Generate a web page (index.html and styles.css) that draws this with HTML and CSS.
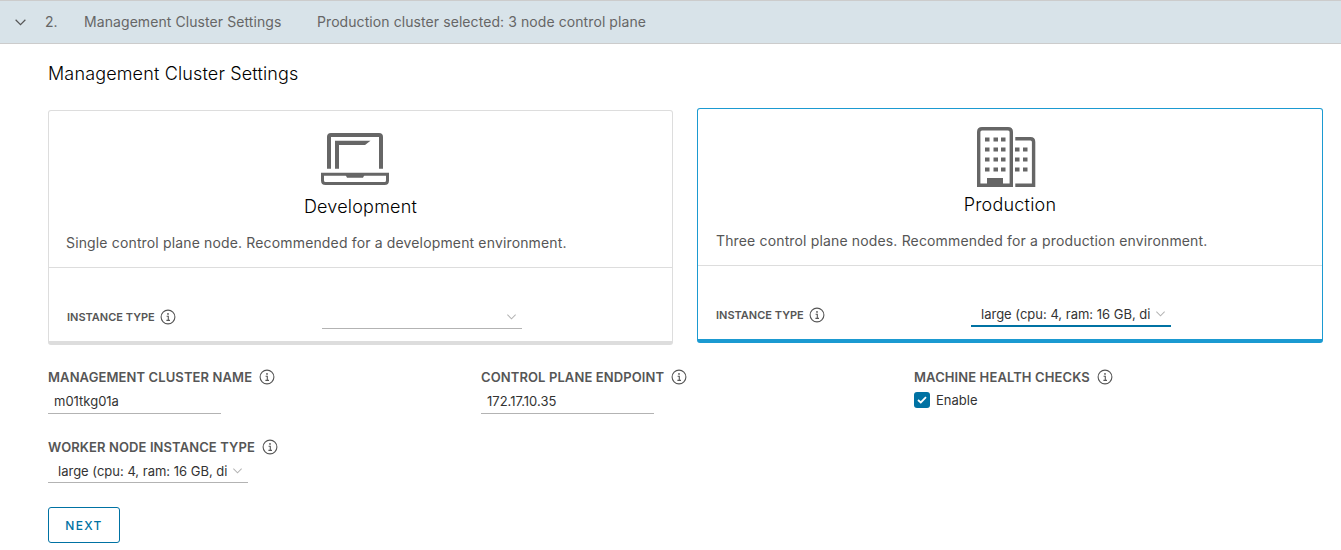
FILE: index.html
```html
<!DOCTYPE html>
<html lang="en">
<head>
  <meta charset="UTF-8" />
  <meta name="viewport" content="width=device-width, initial-scale=1.0"/>
  <title>Management Cluster Settings</title>
  <link rel="stylesheet" href="styles.css">
</head>

<body>
  <svg class="icon-defs" width="0" height="0" aria-hidden="true">
    <symbol id="info" viewBox="0 0 16 16">
      <circle cx="8" cy="8" r="6.9" fill="none" stroke="currentColor" stroke-width="1.1"/>
      <path d="M6.6 7.2H8.3V11.3M6.4 11.4H10" fill="none" stroke="currentColor" stroke-width="1.1"/>
      <circle cx="8" cy="4.9" r="0.9" fill="currentColor"/>
    </symbol>
    <symbol id="caret" viewBox="0 0 12 8">
      <path d="M1.5 1.5L6 6L10.5 1.5" fill="none" stroke="currentColor" stroke-width="1.1"/>
    </symbol>
  </svg>

  <header class="step-bar">
    <svg class="step-caret"><use href="#caret"/></svg>
    <span class="step-num">2.</span>
    <span class="step-title">Management Cluster Settings</span>
    <span class="step-summary">Production cluster selected: 3 node control plane</span>
  </header>

  <main class="content">
    <h2 class="section-title">Management Cluster Settings</h2>

    <div class="cards">
      <section class="card card-dev">
        <div class="card-top">
          <svg class="card-icon" width="68" height="52" viewBox="0 0 68 52">
            <path d="M8 35.700V4Q8 2 10 2H58Q60 2 60 4V35.700" fill="none" stroke="#666" stroke-width="4"/>
            <path d="M14 35.700V7.700H49.500L44 12H18V35.700Z" fill="#666"/>
            <path d="M1.500 41.200H66.500V47.500Q66.500 50.500 63.500 50.500H4.500Q1.500 50.500 1.500 47.500Z" fill="none" stroke="#666" stroke-width="3"/>
            <path d="M24 41H44L42 44.700H26Z" fill="#666"/>
          </svg>
          <h3 class="card-title">Development</h3>
          <p class="card-text">Single control plane node. Recommended for a development environment.</p>
        </div>
        <div class="card-bottom">
          <span class="field-label small">INSTANCE TYPE <svg class="info"><use href="#info"/></svg></span>
          <div class="select select-card"><span class="select-value"></span><svg class="select-caret"><use href="#caret"/></svg></div>
        </div>
      </section>

      <section class="card card-prod">
        <div class="card-top">
          <svg class="card-icon" width="59" height="60" viewBox="0 0 59 60">
            <path d="M1.700 58.300V5Q1.700 1.700 5 1.700H31Q34.300 1.700 34.300 5V58.300Z" fill="none" stroke="#666" stroke-width="3.400"/>
            <path d="M38.300 11.700H53.500Q56.600 11.700 56.600 15V58.300H38.300" fill="none" stroke="#666" stroke-width="3.400"/>
            <rect x="10" y="51" width="16" height="6" fill="#666"/>
            <g fill="#666">
              <rect x="8" y="10.500" width="4.500" height="4"/><rect x="16.500" y="10.500" width="4.500" height="4"/><rect x="24" y="10.500" width="4.500" height="4"/>
              <rect x="8" y="20.500" width="4.500" height="4"/><rect x="16.500" y="20.500" width="4.500" height="4"/><rect x="24" y="20.500" width="4.500" height="4"/>
              <rect x="8" y="30.500" width="4.500" height="4"/><rect x="16.500" y="30.500" width="4.500" height="4"/><rect x="24" y="30.500" width="4.500" height="4"/>
              <rect x="8" y="40.500" width="4.500" height="4"/><rect x="16.500" y="40.500" width="4.500" height="4"/><rect x="24" y="40.500" width="4.500" height="4"/>
              <rect x="38" y="20.500" width="4.500" height="4"/><rect x="46" y="20.500" width="4.500" height="4"/>
              <rect x="38" y="30.500" width="4.500" height="4"/><rect x="46" y="30.500" width="4.500" height="4"/>
              <rect x="38" y="40.500" width="4.500" height="4"/><rect x="46" y="40.500" width="4.500" height="4"/>
            </g>
          </svg>
          <h3 class="card-title">Production</h3>
          <p class="card-text">Three control plane nodes. Recommended for a production environment.</p>
        </div>
        <div class="card-bottom">
          <span class="field-label small">INSTANCE TYPE <svg class="info"><use href="#info"/></svg></span>
          <div class="select select-card select-active"><span class="select-value">large (cpu: 4, ram: 16 GB, disk: 40 GB)</span><svg class="select-caret"><use href="#caret"/></svg></div>
        </div>
      </section>
    </div>

    <div class="form-grid">
      <div class="field">
        <span class="field-label">MANAGEMENT CLUSTER NAME <svg class="info"><use href="#info"/></svg></span>
        <div class="text-input">m01tkg01a</div>
      </div>
      <div class="field">
        <span class="field-label">CONTROL PLANE ENDPOINT <svg class="info"><use href="#info"/></svg></span>
        <div class="text-input">172.17.10.35</div>
      </div>
      <div class="field">
        <span class="field-label">MACHINE HEALTH CHECKS <svg class="info"><use href="#info"/></svg></span>
        <label class="check">
          <span class="check-box"><svg width="10" height="8" viewBox="0 0 10 8"><path d="M1 4L3.800 6.500L9 1.200" fill="none" stroke="#fff" stroke-width="1.800"/></svg></span>
          Enable
        </label>
      </div>
      <div class="field">
        <span class="field-label">WORKER NODE INSTANCE TYPE <svg class="info"><use href="#info"/></svg></span>
        <div class="select"><span class="select-value">large (cpu: 4, ram: 16 GB, disk: 40 GB)</span><svg class="select-caret"><use href="#caret"/></svg></div>
      </div>
    </div>

    <button class="btn-next" type="button">NEXT</button>
  </main>
</body>
</html>
```

FILE: styles.css
```css
* {
  box-sizing: border-box;
}

body {
  margin: 0;
  font-family: Inter, "Open Sans", sans-serif;
  font-size: 13px;
  color: #333;
  background: #fff;
  overflow: hidden;
}

.icon-defs {
  display: block;
}

.step-bar {
  display: flex;
  align-items: center;
  height: 44px;
  padding-bottom: 1px;
  background: #d8e3e9;
  border-top: 1px solid #ccc;
  border-bottom: 1px solid #ccc;
  color: #666;
  font-size: 14px;
  letter-spacing: 0.08px;
}

.step-caret {
  width: 13px;
  height: 9px;
  margin-top: 2px;
  margin-left: 14px;
  color: #565656;
}

.step-num {
  width: 39px;
  margin-left: 18px;
}

.step-title {
  width: 233px;
}

.content {
  padding: 0 18px 0 48px;
}

.section-title {
  margin: 0;
  padding-top: 20px;
  height: 64px;
  font-size: 18px;
  font-weight: 300;
  letter-spacing: 0.15px;
  line-height: 20px;
  color: #000;
}

.cards {
  display: grid;
  grid-template-columns: 625px 626px;
  align-items: start;
  gap: 24px;
  margin-bottom: 24px;
}

.card {
  height: 235px;
  background: #fff;
  border: 1px solid #ddd;
  border-bottom-width: 4px;
  border-radius: 3px;
  color: #565656;
}

.card-dev {
  margin-top: 2px;
}

.card-prod {
  border-color: #1b9ad1;
}

.card-top {
  height: 157px;
  border-bottom: 1px solid #ddd;
  text-align: center;
}

.card-dev .card-top {
  padding: 22px 0 0;
}

.card-prod .card-top {
  padding: 18px 0 0;
}

.card-icon {
  display: block;
}

.card-dev .card-icon {
  margin-left: 272px;
}

.card-prod .card-icon {
  margin-left: 279px;
}

.card-title {
  margin: 10px 0 0;
  font-size: 18px;
  font-weight: 300;
  letter-spacing: 0.2px;
  line-height: 24px;
  color: #000;
}

.card-prod .card-title {
  margin-top: 6px;
}

.card-text {
  margin: 14px 0 0;
  padding-left: 17px;
  font-size: 14px;
  letter-spacing: 0.15px;
  line-height: 20px;
  text-align: left;
  color: #565656;
}

.card-prod .card-text {
  padding-left: 18px;
}

.card-bottom {
  display: flex;
  align-items: center;
  height: 73px;
  padding: 25px 0 0 18px;
}

.field-label {
  display: flex;
  align-items: center;
  gap: 7px;
  font-size: 13px;
  font-weight: 600;
  letter-spacing: 0.1px;
  line-height: 16px;
  color: #565656;
  white-space: nowrap;
}

.field-label.small {
  gap: 5px;
  width: 255px;
  font-size: 11px;
  letter-spacing: 0;
}

.info {
  width: 16px;
  height: 16px;
  color: #565656;
}

.select {
  display: flex;
  align-items: center;
  width: 200px;
  height: 24px;
  padding-left: 10px;
  border-bottom: 1px solid #b3b3b3;
  font-size: 13px;
  color: #333;
}

.select-active {
  border-bottom: 2px solid #0072a3;
}

.select-value {
  width: 169px;
  overflow: hidden;
  white-space: nowrap;
}

.select-caret {
  width: 11px;
  height: 8px;
  margin-left: 5px;
  color: #b3b3b3;
}

.form-grid {
  display: grid;
  grid-template-columns: repeat(3, 433px);
  row-gap: 17px;
}

.field {
  display: flex;
  flex-direction: column;
  align-items: flex-start;
  height: 53px;
}

.text-input {
  width: 173px;
  height: 29px;
  padding: 8px 0 0 6px;
  border-bottom: 1px solid #b3b3b3;
  font-size: 13px;
  line-height: 16px;
}

.field .select {
  margin-top: 4px;
}

.check {
  display: flex;
  align-items: center;
  gap: 6px;
  margin-top: 7px;
  font-size: 13px;
  line-height: 16px;
}

.check-box {
  display: flex;
  align-items: center;
  justify-content: center;
  width: 16px;
  height: 16px;
  background: #0072a3;
  border-radius: 3px;
}

.btn-next {
  display: block;
  width: 72px;
  height: 36px;
  margin-top: 15px;
  padding: 0;
  background: #fff;
  border: 1px solid #0072a3;
  border-radius: 3px;
  color: #0072a3;
  font-family: inherit;
  font-size: 12px;
  font-weight: 500;
  letter-spacing: 1.3px;
}
```
